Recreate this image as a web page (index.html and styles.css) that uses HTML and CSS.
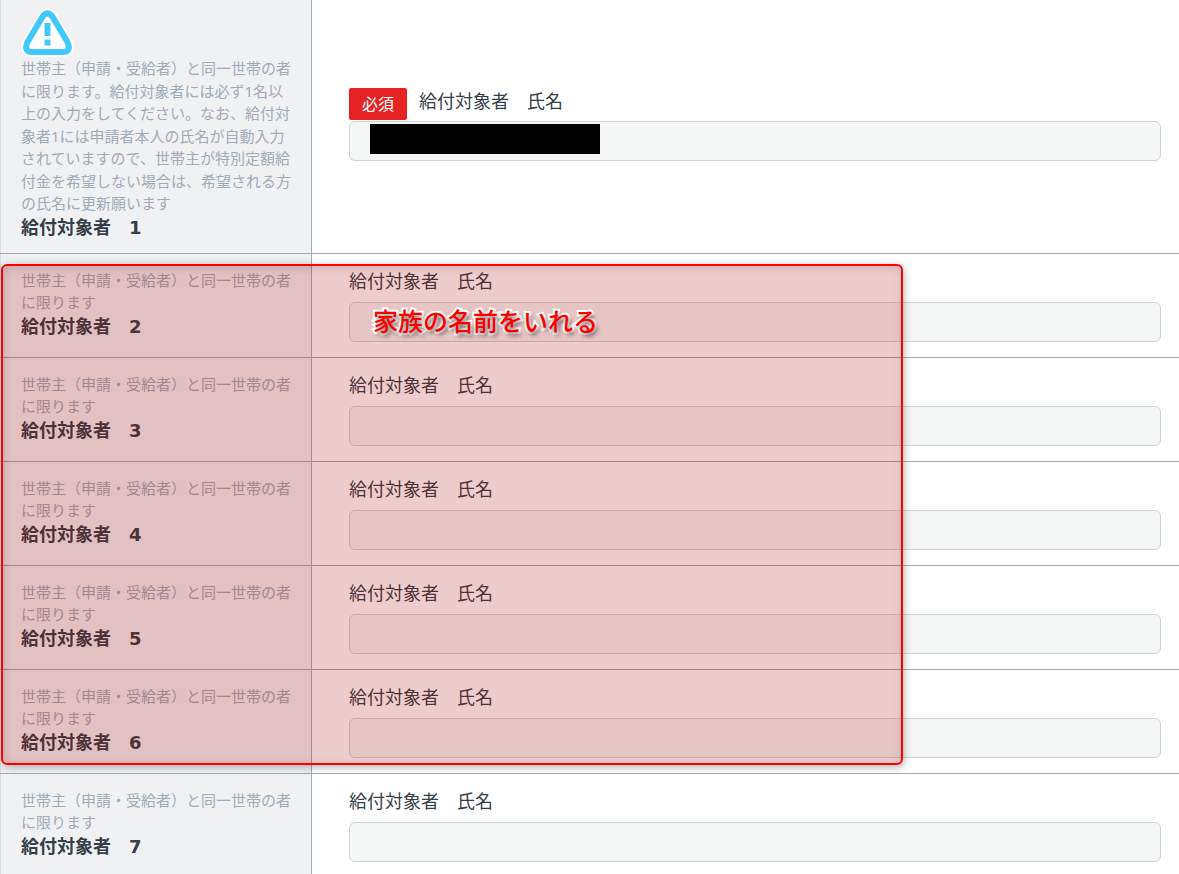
FILE: index.html
```html
<!DOCTYPE html>
<html lang="ja">
<head>
    <meta charset="UTF-8">
    <meta name="viewport" content="width=device-width, initial-scale=1.0">
    <title>給付対象者の入力</title>
    <link rel="stylesheet" href="styles.css">
</head>
<body>
    <form class="entry-form">
        <div class="row row-first">
            <div class="row-head">
                <svg class="warning-icon" width="54" height="50" viewBox="0 0 54 50" aria-hidden="true">
                    <path d="M22 9L6.500 35Q2.500 45 11 45H42Q50.500 45 46.500 35L31 9Q26.500 3.500 22 9Z" fill="none" stroke="#fff" stroke-width="10" stroke-linejoin="round"/>
                    <path d="M22 9L6.500 35Q2.500 45 11 45H42Q50.500 45 46.500 35L31 9Q26.500 3.500 22 9Z" fill="#fff" stroke="#40c8fc" stroke-width="6" stroke-linejoin="round"/>
                    <path d="M23.500 16h6v13h-6zM23.500 32.500h6v6h-6z" fill="#40c8fc"/>
                </svg>
                <p class="note">世帯主（申請・受給者）と同一世帯の者に限ります。給付対象者には必ず1名以上の入力をしてください。なお、給付対象者1には申請者本人の氏名が自動入力されていますので、世帯主が特別定額給付金を希望しない場合は、希望される方の氏名に更新願います</p>
                <p class="title">給付対象者　1</p>
            </div>
            <div class="row-body">
                <div class="label-line">
                    <span class="required">必須</span>
                    <label for="name1">給付対象者　氏名</label>
                </div>
                <div class="field">
                    <input type="text" id="name1">
                    <span class="mask"></span>
                </div>
            </div>
        </div>

        <div class="family">
            <div class="row">
                <div class="row-head">
                    <p class="note">世帯主（申請・受給者）と同一世帯の者に限ります</p>
                    <p class="title">給付対象者　2</p>
                </div>
                <div class="row-body">
                    <label for="name2">給付対象者　氏名</label>
                    <div class="field">
                        <input type="text" id="name2">
                        <span class="callout">家族の名前をいれる</span>
                    </div>
                </div>
            </div>
            <div class="row">
                <div class="row-head">
                    <p class="note">世帯主（申請・受給者）と同一世帯の者に限ります</p>
                    <p class="title">給付対象者　3</p>
                </div>
                <div class="row-body">
                    <label for="name3">給付対象者　氏名</label>
                    <div class="field"><input type="text" id="name3"></div>
                </div>
            </div>
            <div class="row">
                <div class="row-head">
                    <p class="note">世帯主（申請・受給者）と同一世帯の者に限ります</p>
                    <p class="title">給付対象者　4</p>
                </div>
                <div class="row-body">
                    <label for="name4">給付対象者　氏名</label>
                    <div class="field"><input type="text" id="name4"></div>
                </div>
            </div>
            <div class="row">
                <div class="row-head">
                    <p class="note">世帯主（申請・受給者）と同一世帯の者に限ります</p>
                    <p class="title">給付対象者　5</p>
                </div>
                <div class="row-body">
                    <label for="name5">給付対象者　氏名</label>
                    <div class="field"><input type="text" id="name5"></div>
                </div>
            </div>
            <div class="row">
                <div class="row-head">
                    <p class="note">世帯主（申請・受給者）と同一世帯の者に限ります</p>
                    <p class="title">給付対象者　6</p>
                </div>
                <div class="row-body">
                    <label for="name6">給付対象者　氏名</label>
                    <div class="field"><input type="text" id="name6"></div>
                </div>
            </div>
            <div class="highlight"></div>
        </div>

        <div class="row">
            <div class="row-head">
                <p class="note">世帯主（申請・受給者）と同一世帯の者に限ります</p>
                <p class="title">給付対象者　7</p>
            </div>
            <div class="row-body">
                <label for="name7">給付対象者　氏名</label>
                <div class="field"><input type="text" id="name7"></div>
            </div>
        </div>
    </form>
</body>
</html>
```
FILE: styles.css
```css
* {
    box-sizing: border-box;
}
body {
    margin: 0;
    background: #fff;
    color: #343f48;
    font-family: "Noto Sans", "Noto Sans CJK JP", sans-serif;
    font-size: 18px;
}
.row {
    display: flex;
    border-bottom: 1px solid #9eabb8;
}
.row-head {
    flex: 0 0 312px;
    padding: 15px 20px 17px;
    background: #f0f1f3;
    border-left: 1px solid #d5dde1;
    border-right: 1px solid #9eabb8;
}
.row-body {
    flex: 1;
    display: flex;
    flex-direction: column;
    justify-content: center;
    padding: 14px 18px 15px 37px;
}
.row-first .row-head {
    padding-top: 7px;
    padding-bottom: 12px;
}
.row-first .row-body {
    padding-bottom: 18px;
}
.warning-icon {
    display: block;
}
.note {
    margin: 0;
    color: #9eabb8;
    font-size: 15px;
    line-height: 1.5;
}
.title {
    margin: 0;
    font-family: "DejaVu Sans", "Noto Sans CJK JP", sans-serif;
    font-weight: bold;
    line-height: 26px;
}
label {
    line-height: 26px;
    margin-bottom: 8px;
}
.label-line {
    display: flex;
    align-items: flex-start;
    gap: 12px;
    margin-bottom: 1px;
}
.label-line label {
    margin: 0;
}
.required {
    padding: 0 13px;
    background: #e62222;
    border-radius: 2px;
    color: #fff;
    font-size: 16px;
    line-height: 32px;
}
.field {
    position: relative;
}
input {
    display: block;
    width: 100%;
    height: 40px;
    padding: 0 12px;
    background: #f5f7f6;
    border: 1px solid #ced4dc;
    border-radius: 6px;
    font: inherit;
}
.mask {
    position: absolute;
    top: 3px;
    left: 21px;
    width: 230px;
    height: 30px;
    background: #000;
}

/* 家族の入力欄を囲む赤枠 */
.family {
    position: relative;
}
.highlight {
    position: absolute;
    top: 10px;
    bottom: 9px;
    left: 1px;
    width: 902px;
    background: rgba(175, 0, 0, 0.2);
    border: 2px solid #f00;
    border-radius: 6px;
    box-shadow: 1px 2px 8px rgba(0, 0, 0, 0.3), inset 1px 2px 8px rgba(0, 0, 0, 0.15);
    pointer-events: none;
}
.callout {
    position: absolute;
    z-index: 1;
    top: 0;
    left: 24px;
    color: #f00;
    font-size: 25px;
    font-weight: 500;
    line-height: 38px;
    white-space: nowrap;
    -webkit-text-stroke: 4px #fff;
    paint-order: stroke fill;
    text-shadow: 2px 3px 4px rgba(0, 0, 0, 0.6);
    pointer-events: none;
}
```
